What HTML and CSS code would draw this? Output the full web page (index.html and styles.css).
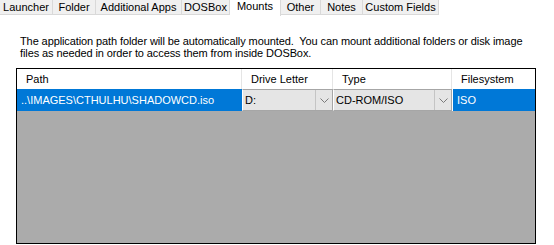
FILE: index.html
```html
<!DOCTYPE html>
<html lang="en">
<head>
    <meta charset="UTF-8">
    <title>Mounts</title>
    <link rel="stylesheet" href="styles.css">
</head>
<body>
    <div class="tabs">
        <div class="tab" style="width: 53px;">Launcher</div>
        <div class="tab" style="width: 43px;">Folder</div>
        <div class="tab" style="width: 86px;">Additional Apps</div>
        <div class="tab" style="width: 48px;">DOSBox</div>
        <div class="tab active" style="width: 51px;">Mounts</div>
        <div class="tab" style="width: 40px;">Other</div>
        <div class="tab" style="width: 42px;">Notes</div>
        <div class="tab" style="width: 76px;">Custom Fields</div>
    </div>

    <p class="intro">The application path folder will be automatically mounted.&nbsp; You can mount additional folders or disk image files as needed in order to access them from inside DOSBox.</p>

    <div class="grid">
        <div class="row header">
            <div class="cell col-path">Path</div>
            <div class="cell col-drive">Drive Letter</div>
            <div class="cell col-type">Type</div>
            <div class="cell col-fs">Filesystem</div>
        </div>
        <div class="row data">
            <div class="cell col-path selected">..\IMAGES\CTHULHU\SHADOWCD.iso</div>
            <div class="cell col-drive combo">
                <span class="combo-text">D:</span>
                <span class="combo-btn"><svg width="9" height="5" viewBox="0 0 9 5"><path d="M0.5 0.5 L4.5 4.5 L8.5 0.5" fill="none" stroke="#7a7a7a" stroke-width="1"/></svg></span>
            </div>
            <div class="cell col-type combo">
                <span class="combo-text">CD-ROM/ISO</span>
                <span class="combo-btn"><svg width="9" height="5" viewBox="0 0 9 5"><path d="M0.5 0.5 L4.5 4.5 L8.5 0.5" fill="none" stroke="#7a7a7a" stroke-width="1"/></svg></span>
            </div>
            <div class="cell col-fs selected">ISO</div>
        </div>
    </div>
</body>
</html>
```

FILE: styles.css
```css
body {
    margin: 0;
    background: #fff;
    font-family: "Liberation Sans", Arial, sans-serif;
    font-size: 11px;
    color: #000;
    width: 554px;
    height: 245px;
    overflow: hidden;
}
.tabs {
    display: flex;
    height: 16px;
    align-items: flex-start;
}
.tab {
    box-sizing: border-box;
    height: 15px;
    line-height: 15px;
    background: #f0f0f0;
    border-right: 1px solid #d9d9d9;
    border-bottom: 1px solid #d9d9d9;
    text-align: center;
    white-space: nowrap;
}
.tab.active {
    background: #fff;
    height: 16px;
    line-height: 12px;
    border-bottom: none;
}
.intro {
    margin: 19px 0 0 20px;
    width: 520px;
    line-height: 12px;
    letter-spacing: -0.1px;
}
.grid {
    margin: 9px 0 0 16px;
    width: 520px;
    height: 176px;
    box-sizing: border-box;
    border: 1px solid #000;
    background: #ababab;
}
.row {
    display: flex;
}
.header {
    height: 20px;
    background: #fff;
}
.header .cell {
    line-height: 20px;
    padding-left: 9px;
    border-right: 1px solid #e5e5e5;
}
.data {
    height: 22px;
}
.cell {
    box-sizing: border-box;
    white-space: nowrap;
    overflow: hidden;
}
.col-path { width: 225px; }
.col-drive { width: 91px; }
.col-type { width: 119px; }
.col-fs { width: 83px; }
.header .col-fs { border-right: none; }
.selected {
    background: #0078d7;
    color: #fff;
    line-height: 22px;
    padding-left: 4px;
}
.col-fs.selected { border-left: 1px solid #fff; }
.combo {
    display: flex;
    background: #e5e5e5;
    border: 1px solid #a6a6a6;
    border-left-color: #fff;
}
.combo-text {
    flex: 1;
    line-height: 20px;
    padding-left: 2px;
}
.combo-btn {
    width: 16px;
    border-left: 1px solid #c4c4c4;
    display: flex;
    align-items: center;
    justify-content: center;
}
```
